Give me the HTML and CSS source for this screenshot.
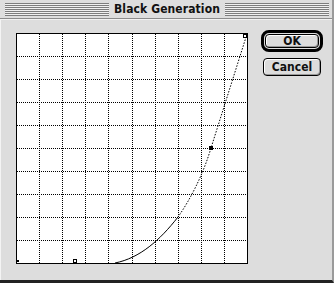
FILE: index.html
```html
<!DOCTYPE html>
<html lang="en">
<head>
  <meta charset="utf-8">
  <title>Black Generation</title>
  <link rel="stylesheet" href="styles.css">
</head>
<body>
  <div class="window">
    <div class="titlebar">
      <span class="stripes"></span>
      <span class="title">Black Generation</span>
      <span class="stripes"></span>
    </div>

    <div class="content">
      <svg class="curve-box" width="232" height="231" viewBox="0 0 232 231">
        <rect x="0.5" y="0.5" width="231" height="230" fill="#fff" stroke="#000"/>
        <g class="grid">
          <line x1="23.5" y1="1" x2="23.5" y2="230"/>
          <line x1="46.5" y1="1" x2="46.5" y2="230"/>
          <line x1="69.5" y1="1" x2="69.5" y2="230"/>
          <line x1="92.5" y1="1" x2="92.5" y2="230"/>
          <line x1="116.5" y1="1" x2="116.5" y2="230"/>
          <line x1="139.5" y1="1" x2="139.5" y2="230"/>
          <line x1="162.5" y1="1" x2="162.5" y2="230"/>
          <line x1="185.5" y1="1" x2="185.5" y2="230"/>
          <line x1="208.5" y1="1" x2="208.5" y2="230"/>
          <line x1="1" y1="23.5" x2="231" y2="23.5"/>
          <line x1="1" y1="46.5" x2="231" y2="46.5"/>
          <line x1="1" y1="69.5" x2="231" y2="69.5"/>
          <line x1="1" y1="92.5" x2="231" y2="92.5"/>
          <line x1="1" y1="115.5" x2="231" y2="115.5"/>
          <line x1="1" y1="138.5" x2="231" y2="138.5"/>
          <line x1="1" y1="161.5" x2="231" y2="161.5"/>
          <line x1="1" y1="184.5" x2="231" y2="184.5"/>
          <line x1="1" y1="207.5" x2="231" y2="207.5"/>
        </g>
        <path class="curve" d="M99 230 C124 225 144 207 162 184"/>
        <path class="curve dotted" d="M162 184 C174 167 187 142 195 115 L231 1"/>
        <rect x="193" y="113" width="4" height="4" fill="#000"/>
        <rect x="57.5" y="226.5" width="3" height="3" fill="#fff" stroke="#000"/>
        <rect x="227.5" y="1.5" width="3" height="3" fill="#fff" stroke="#000"/>
        <rect x="1" y="227" width="2" height="2" fill="#000"/>
      </svg>

      <div class="buttons">
        <span class="default-ring"><button class="btn">OK</button></span>
        <button class="btn cancel">Cancel</button>
      </div>
    </div>
  </div>
</body>
</html>
```

FILE: styles.css
```css
body {
  margin: 0;
  background: #dddddd;
  font-family: 'DejaVu Sans Condensed', 'DejaVu Sans', sans-serif;
}

.window {
  width: 334px;
  height: 283px;
  box-sizing: border-box;
  background: #dddddd;
  border-right: 2px solid #9a9a9a;
  border-bottom: 3px solid #222;
  box-shadow: inset 1px 0 0 #f4f4f4;
}

.titlebar {
  height: 18px;
  display: flex;
  align-items: center;
  gap: 5px;
  padding: 0 3px 0 5px;
  border-bottom: 1px solid #8c8c8c;
  background: #dedede;
}

.stripes {
  flex: 1;
  height: 13px;
  margin-top: 1px;
  background: repeating-linear-gradient(to bottom, #7d7d7d 0, #7d7d7d 1px, #f0f0f0 1px, #f0f0f0 2px);
}

.title {
  font-size: 12px;
  font-weight: bold;
  color: #111;
  letter-spacing: 0.1px;
}

.content {
  display: flex;
  align-items: flex-start;
  border-top: 1px solid #f2f2f2;
}

.curve-box {
  display: block;
  margin: 13px 0 0 16px;
}

.grid line {
  stroke: #000;
  stroke-width: 1;
  stroke-dasharray: 1 1;
}

.curve {
  fill: none;
  stroke: #000;
  stroke-width: 1;
}

.curve.dotted {
  stroke-dasharray: 1.5 1.5;
}

.buttons {
  display: flex;
  flex-direction: column;
  align-items: flex-start;
  gap: 6px;
  margin: 10px 0 0 13px;
}

.default-ring {
  display: block;
  border: 3px solid #000;
  border-radius: 8px;
  padding: 1px;
}

.btn {
  display: block;
  width: 54px;
  height: 14px;
  padding: 0;
  border: 1px solid #000;
  border-radius: 4px;
  background: #dcdcdc;
  box-shadow: inset 1px 1px 0 #fff, inset -1px -1px 0 #999;
  font-family: 'DejaVu Sans Condensed', 'DejaVu Sans', sans-serif;
  font-size: 12px;
  font-weight: bold;
  line-height: 12px;
  color: #111;
}

.btn.cancel {
  width: 58px;
  height: 18px;
  margin-left: 2px;
}
```
